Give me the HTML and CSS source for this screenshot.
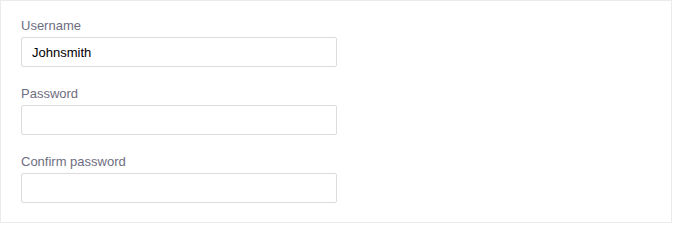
FILE: index.html
```html
<!DOCTYPE html>
<html>
<head>
<meta charset="utf-8">
<link rel="stylesheet" href="styles.css">
</head>
<body>
<form class="card">
  <div class="field">
    <label class="label" for="u">Username</label>
    <input class="input" id="u" type="text" value="Johnsmith">
  </div>
  <div class="field">
    <label class="label" for="p">Password</label>
    <input class="input" id="p" type="password">
  </div>
  <div class="field">
    <label class="label" for="c">Confirm password</label>
    <input class="input" id="c" type="password">
  </div>
</form>
</body>
</html>
```

FILE: styles.css
```css
html, body {
  margin: 0;
  padding: 0;
  background: #ffffff;
}
body {
  font-family: "Liberation Sans", Arial, sans-serif;
  font-size: 13px;
}
.card {
  box-sizing: border-box;
  width: 672px;
  height: 223px;
  margin: 0;
  border: 1px solid #ebebeb;
  background: #ffffff;
  padding: 16px 20px 19px 20px;
  display: flex;
  flex-direction: column;
  gap: 18px;
}
.field {
  display: flex;
  flex-direction: column;
  gap: 2px;
}
.label {
  font-size: 13px;
  line-height: 18px;
  color: #6e6e82;
}
.input {
  box-sizing: border-box;
  width: 316px;
  height: 30px;
  margin: 0;
  padding: 0 10px;
  border: 1px solid #dcdcdc;
  border-radius: 2px;
  background: #ffffff;
  font-family: "Liberation Sans", Arial, sans-serif;
  font-size: 13px;
  color: #000000;
  outline: none;
}
```
